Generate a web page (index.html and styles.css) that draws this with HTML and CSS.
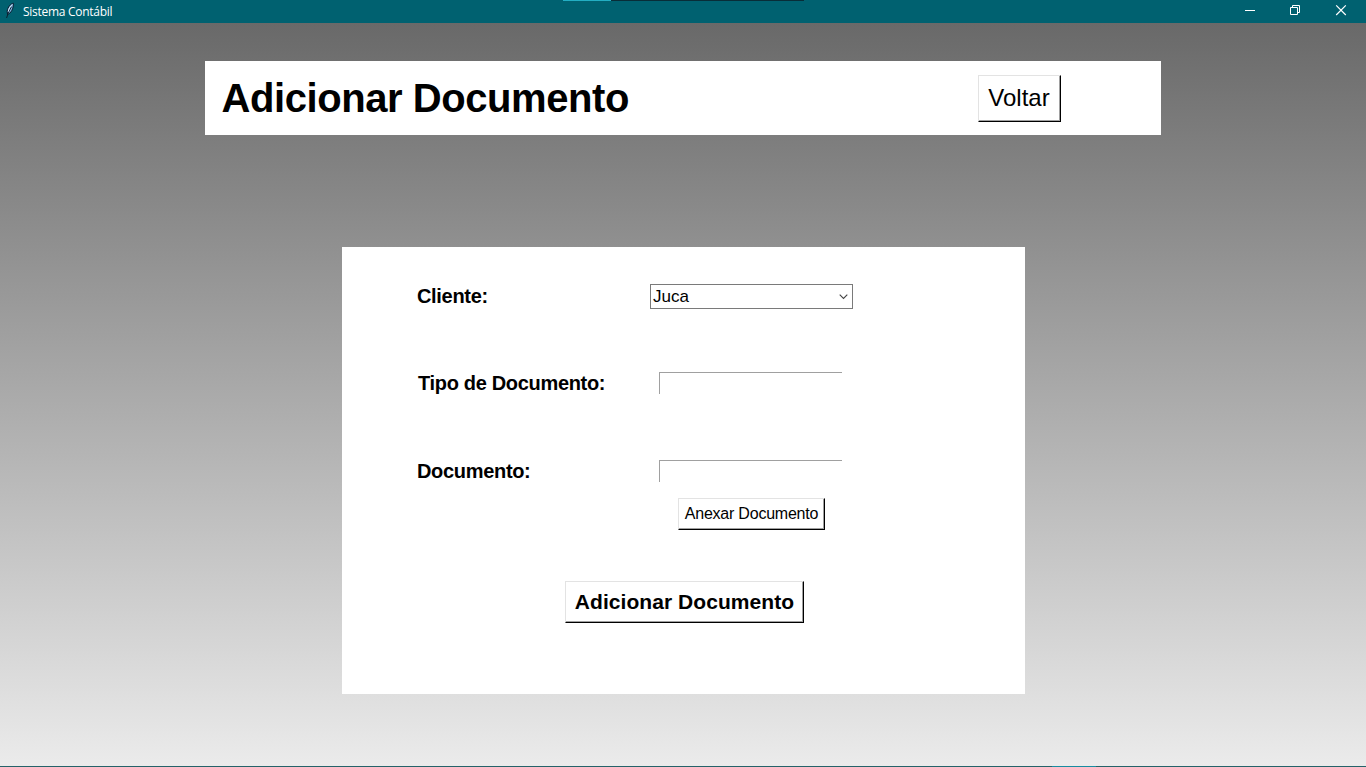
FILE: index.html
```html
<!DOCTYPE html>
<html lang="pt-BR">
<head>
<meta charset="utf-8">
<title>Sistema Contábil</title>
<link rel="stylesheet" href="styles.css">
</head>
<body>
<div class="window">
  <header class="titlebar">
    <svg class="feather" width="10" height="17" viewBox="0 0 10 17">
      <path d="M8.300 1.200C5.500 1.800 2.800 5 2.200 9.200L2.500 12.500C5.800 11.500 8.800 6.500 8.300 1.200Z" fill="#7fb0dc" stroke="#061a2c" stroke-width="1"/>
      <path d="M6.500 4.800C4.800 7.500 3 11 1.600 16" fill="none" stroke="#0a1a28" stroke-width=".9"/>
      <path d="M7.300 2.600C5 4.300 3.800 6.800 3.300 9.400" fill="none" stroke="#d8ecf8" stroke-width="1"/>
    </svg>
    <span class="app-name">Sistema Contábil</span>
    <div class="controls">
      <svg width="46" height="23" viewBox="0 0 46 23"><path d="M17 10.5h10" /></svg>
      <svg width="46" height="23" viewBox="0 0 46 23"><path d="M16.500 7.500h7v7h-7zM18.500 7.500v-2h7v7h-2" /></svg>
      <svg width="46" height="23" viewBox="0 0 46 23"><path class="cross" d="M16.200 5.400l9.600 9.600M25.800 5.400l-9.600 9.600" /></svg>
    </div>
    <div class="top-strip"><i></i></div>
  </header>
  <main class="content">
    <section class="heading">
      <h1>Adicionar Documento</h1>
      <button class="btn back">Voltar</button>
    </section>
    <section class="form">
      <div class="row client">
        <label>Cliente:</label>
        <div class="combo"><span>Juca</span>
          <svg width="9" height="6" viewBox="0 0 9 6"><path d="M.7.7l3.800 3.800L8.300.7" /></svg>
        </div>
      </div>
      <div class="row type">
        <label>Tipo de Documento:</label>
        <div class="entry"></div>
      </div>
      <div class="row document">
        <label>Documento:</label>
        <div class="entry"></div>
      </div>
      <button class="btn attach">Anexar Documento</button>
      <button class="btn submit">Adicionar Documento</button>
    </section>
  </main>
  <footer class="edge"><i></i></footer>
</div>
</body>
</html>
```

FILE: styles.css
```css
* { box-sizing: border-box; }
body { margin: 0; overflow: hidden; font-family: "Liberation Sans", Arial, sans-serif; color: #000; }
.window { width: 1366px; height: 767px; display: flex; flex-direction: column; }

.titlebar { position: relative; height: 23px; flex: none; display: flex; background: #006170; color: #fff; }
.feather { margin: 2px 0 0 5px; }
.app-name { margin-left: 8px; font: 12px/23px "Open Sans", "Noto Sans", sans-serif; letter-spacing: -0.28px; }
.controls { display: flex; margin-left: auto; }
.controls svg { display: block; fill: none; stroke: #fff; stroke-width: 1; }
.controls .cross { stroke-width: 1.2; }
.top-strip { position: absolute; top: 0; left: 563px; width: 241px; height: 1px; background: #082d38; }
.top-strip i { display: block; width: 48px; height: 1px; background: #23aec3; }

.content { flex: 1; display: flex; flex-direction: column; align-items: center; padding-top: 38px; background: linear-gradient(#696969, #ebebeb); }
.heading { width: 956px; height: 74px; display: flex; align-items: flex-start; background: #fff; padding: 14px 100px 0 16.5px; }
h1 { margin: 0; font-size: 40px; line-height: 46px; letter-spacing: -0.43px; white-space: nowrap; }

.btn { display: flex; align-items: center; justify-content: center; padding: 0; font-family: inherit; color: #000; white-space: nowrap; background: #fff; border: 1px solid; border-color: #e3e3e3 #000 #000 #e3e3e3; box-shadow: inset -1px -1px #a0a0a0; }
.back { width: 83px; height: 47px; margin-left: auto; padding: 0 1px 2px 0; font-size: 24px; }

.form { width: 683px; height: 447px; margin: 112px 0 0 1px; padding: 37px 75px 0; display: flex; flex-direction: column; background: #fff; }
.row { display: flex; align-items: flex-start; }
label { width: 233px; font-size: 20px; line-height: 23px; font-weight: bold; letter-spacing: -0.32px; white-space: nowrap; }
.client label { line-height: 25px; }
.combo { width: 203px; height: 25px; display: flex; align-items: center; justify-content: space-between; border: 1px solid #7a7a7a; padding: 0 4px 0 2px; font-size: 17px; line-height: 23px; }
.combo svg { fill: none; stroke: #444; stroke-width: 1.1; }
.entry { width: 183px; height: 22px; margin-left: 9px; border-top: 1px solid #a0a0a0; border-left: 1px solid #a0a0a0; }
.type, .document { height: 24px; }
.type { margin-top: 63px; }
.type label { padding-left: 1px; }
.document { margin-top: 64px; }
.attach { width: 147px; height: 32px; margin: 14px 0 0 261px; font-size: 16px; letter-spacing: -0.22px; }
.submit { width: 239px; height: 42px; margin: 51px 0 0 148px; font-size: 21px; font-weight: bold; letter-spacing: 0.06px; }

.edge { height: 1px; flex: none; background: #256269; }
.edge i { display: block; width: 44px; height: 1px; margin-left: 1052px; background: #188ca0; }
```
